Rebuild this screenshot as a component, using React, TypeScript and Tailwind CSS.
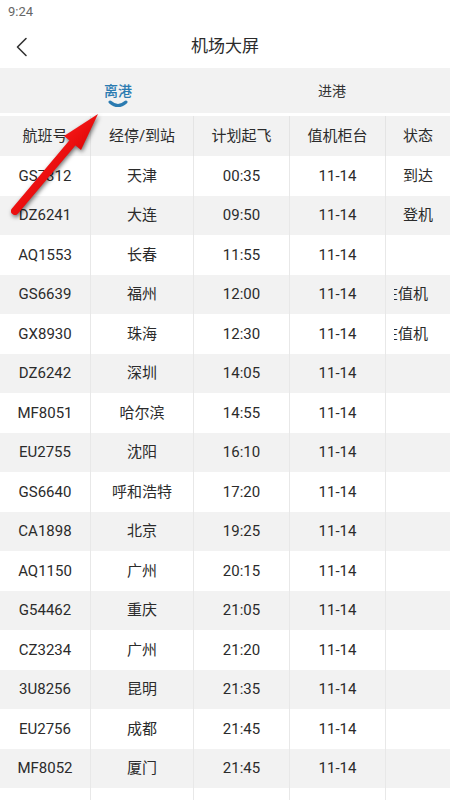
import { useState } from 'react';

type Flight = {
  no: string;
  dest: string;
  time: string;
  counter: string;
  status?: string;
  clipped?: boolean;
};

const DEPARTURES: Flight[] = [
  { no: 'GS7312', dest: '天津', time: '00:35', counter: '11-14', status: '到达' },
  { no: 'DZ6241', dest: '大连', time: '09:50', counter: '11-14', status: '登机' },
  { no: 'AQ1553', dest: '长春', time: '11:55', counter: '11-14' },
  { no: 'GS6639', dest: '福州', time: '12:00', counter: '11-14', status: '正在值机', clipped: true },
  { no: 'GX8930', dest: '珠海', time: '12:30', counter: '11-14', status: '正在值机', clipped: true },
  { no: 'DZ6242', dest: '深圳', time: '14:05', counter: '11-14' },
  { no: 'MF8051', dest: '哈尔滨', time: '14:55', counter: '11-14' },
  { no: 'EU2755', dest: '沈阳', time: '16:10', counter: '11-14' },
  { no: 'GS6640', dest: '呼和浩特', time: '17:20', counter: '11-14' },
  { no: 'CA1898', dest: '北京', time: '19:25', counter: '11-14' },
  { no: 'AQ1150', dest: '广州', time: '20:15', counter: '11-14' },
  { no: 'G54462', dest: '重庆', time: '21:05', counter: '11-14' },
  { no: 'CZ3234', dest: '广州', time: '21:20', counter: '11-14' },
  { no: '3U8256', dest: '昆明', time: '21:35', counter: '11-14' },
  { no: 'EU2756', dest: '成都', time: '21:45', counter: '11-14' },
  { no: 'MF8052', dest: '厦门', time: '21:45', counter: '11-14' },
  { no: '', dest: '', time: '', counter: '' },
];

const TABS = ['离港', '进港'];

// column widths include the 1px right border
const COL = ['w-[91px]', 'w-[103px]', 'w-[96px]', 'w-[96px]'];

export default function App() {
  const [tab, setTab] = useState(0);

  return (
    <div className="relative min-h-[800px] w-[450px] overflow-hidden bg-white font-['Roboto','Noto_Sans_CJK_SC',sans-serif] text-[#2b2b2b]">
      {/* Status bar */}
      <div className="flex h-[24px] items-center pl-[8px] text-[13px] text-[#666]">9:24</div>

      {/* Nav bar */}
      <div className="relative flex h-[44px] items-center justify-center">
        <button type="button" className="absolute top-[13px] left-[15px] p-0" aria-label="返回">
          <svg width="14" height="20" viewBox="0 0 14 20" fill="none">
            <path d="M11 1.5 L2.5 10 L11 18.5" stroke="#333" strokeWidth="1.6" strokeLinecap="round" strokeLinejoin="round" />
          </svg>
        </button>
        <h1 className="text-[17px] leading-none">机场大屏</h1>
      </div>

      {/* Tabs */}
      <div className="flex h-[45px] bg-[#f2f2f2] px-[11px]">
        {TABS.map((t, i) => {
          const active = tab === i;
          return (
            <button
              key={t}
              type="button"
              onClick={() => setTab(i)}
              className="flex flex-1 flex-col items-center pt-[13px]"
            >
              <span
                className={`text-[14px] leading-[20px] ${active ? 'font-medium text-[#2b7bb1]' : 'text-[#333]'}`}
              >
                {t}
              </span>
              {active && (
                <svg width="22" height="8" viewBox="0 0 22 8" className="-mt-[1px]">
                  <path d="M3 2 Q11 9 19 2" stroke="#2b7bb1" strokeWidth="3" fill="none" strokeLinecap="round" />
                </svg>
              )}
            </button>
          );
        })}
      </div>

      {/* Table */}
      <div className="mt-[3px] text-[15px]">
        <div className="flex h-[40px] bg-[#f2f2f2]">
          {['航班号', '经停/到站', '计划起飞', '值机柜台'].map((h, i) => (
            <div key={h} className={`${COL[i]} flex shrink-0 items-center justify-center border-r border-[#e4e4e4]`}>
              {h}
            </div>
          ))}
          <div className="flex flex-1 items-center justify-center">状态</div>
        </div>

        {DEPARTURES.map((f, r) => (
          <div key={r} className={`flex h-[39.5px] ${r % 2 === 1 ? 'bg-[#f2f2f2]' : 'bg-white'}`}>
            {[f.no, f.dest, f.time, f.counter].map((v, i) => (
              <div key={i} className={`${COL[i]} flex shrink-0 items-center justify-center border-r border-[#e8e8e8]`}>
                {v}
              </div>
            ))}
            {f.clipped ? (
              <div className="flex min-w-0 flex-1 pl-[8px]">
                <div className="flex min-w-0 flex-1 items-center justify-end overflow-hidden pr-[22px] whitespace-nowrap">
                  {f.status}
                </div>
              </div>
            ) : (
              <div className="flex flex-1 items-center justify-center">{f.status}</div>
            )}
          </div>
        ))}
      </div>

      {/* Red annotation arrow */}
      <svg
        className="pointer-events-none absolute top-0 left-0 drop-shadow-[1px_2px_2px_rgba(0,0,0,0.55)]"
        width="450"
        height="800"
        viewBox="0 0 450 800"
      >
        <defs>
          <linearGradient id="arrowRed" x1="0" y1="0" x2="1" y2="1">
            <stop offset="0" stopColor="#ff2020" />
            <stop offset="1" stopColor="#d80000" />
          </linearGradient>
        </defs>
        <path d="M15 211 L74 141" stroke="url(#arrowRed)" strokeWidth="8" strokeLinecap="round" />
        <polygon points="98,114 64,136 81,150" fill="url(#arrowRed)" />
      </svg>
    </div>
  );
}
